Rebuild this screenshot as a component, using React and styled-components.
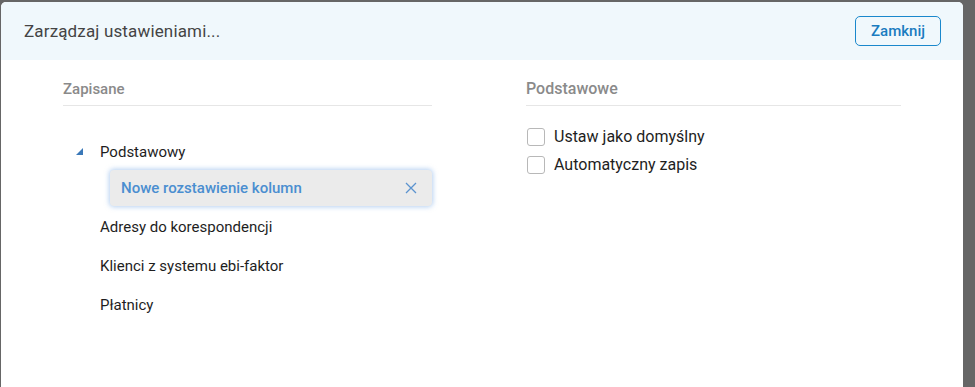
import React from 'react';
import styled, { createGlobalStyle } from 'styled-components';

const Global = createGlobalStyle`
  html, body {
    margin: 0;
    padding: 0;
    height: 100%;
    background: #666666;
    font-family: Roboto, "Liberation Sans", sans-serif;
    overflow: hidden;
  }
  #root { height: 100%; }
`;

const Backdrop = styled.div`
  height: 100%;
  padding: 2px 12px 0 1px;
  box-sizing: border-box;
  display: flex;
`;

const Modal = styled.div`
  flex: 1;
  background: #fff;
  border-radius: 5px 5px 0 0;
  overflow: hidden;
  display: flex;
  flex-direction: column;
`;

const Header = styled.div`
  height: 58px;
  background: #f0f8fc;
  display: flex;
  align-items: center;
  justify-content: space-between;
  padding: 0 22px 0 23px;
`;

const Title = styled.h2`
  margin: 0;
  font-size: 17px;
  font-weight: 400;
  color: #444;
  letter-spacing: 0.15px;
`;

const CloseButton = styled.button`
  height: 30px;
  width: 86px;
  padding: 0;
  border: 1px solid #1a88cc;
  border-radius: 5px;
  background: transparent;
  color: #1a7cc0;
  font-family: inherit;
  font-size: 15px;
  font-weight: 500;
  cursor: pointer;
`;

const Body = styled.div`
  display: grid;
  grid-template-columns: 369px 375px;
  column-gap: 94px;
  padding: 20px 0 0 62px;
`;

const Column = styled.section`
  display: flex;
  flex-direction: column;
`;

const SectionTitle = styled.div`
  font-size: ${p => p.$size || 15}px;
  font-weight: 500;
  color: #8a8a8a;
  padding-bottom: 7px;
  border-bottom: 1px solid #e6e6e6;
  line-height: 18px;
`;

const Tree = styled.ul`
  list-style: none;
  margin: 0;
  padding: 36px 0 0 0;
  font-size: 15px;
  color: #1e1e1e;
`;

const Node = styled.li`
  display: flex;
  align-items: center;
  height: 20px;
  padding-left: ${p => (p.$leaf ? 37 : 13)}px;
  margin-bottom: ${p => p.$gap || 19}px;
`;

const Caret = styled.svg`
  width: 8px;
  height: 8px;
  margin-right: 16px;
`;

const Selected = styled.div`
  margin: 0 0 11px 47px;
  height: 36px;
  background: #ebebeb;
  border-radius: 4px;
  box-shadow: 0 0 5px 1px rgba(120, 170, 230, 0.55);
  display: flex;
  align-items: center;
  justify-content: space-between;
  padding: 0 15px 0 11px;
  color: #4a8ed0;
  font-size: 15px;
  font-weight: 500;
`;

const Options = styled.div`
  display: flex;
  flex-direction: column;
  gap: 9px;
  padding-top: 21px;
`;

const Option = styled.label`
  display: flex;
  align-items: center;
  gap: 9px;
  font-size: 16px;
  color: #1e1e1e;
`;

const Box = styled.span`
  width: 16px;
  height: 16px;
  border: 1px solid #b8b8b8;
  border-radius: 3px;
  background: #fff;
  margin-left: 1px;
`;

export default function App() {
  return (
    <>
      <Global />
      <Backdrop>
        <Modal>
          <Header>
            <Title>Zarządzaj ustawieniami...</Title>
            <CloseButton>Zamknij</CloseButton>
          </Header>
          <Body>
            <Column>
              <SectionTitle>Zapisane</SectionTitle>
              <Tree>
                <Node $gap={8}>
                  <Caret viewBox="0 0 8 8">
                    <polygon points="7,0 7,7 0,7" fill="#3a78b8" />
                  </Caret>
                  Podstawowy
                </Node>
                <Selected>
                  Nowe rozstawienie kolumn
                  <svg width="12" height="12" viewBox="0 0 12 12">
                    <path d="M1 1 L11 11 M11 1 L1 11" stroke="#5b93cf" strokeWidth="1.3" />
                  </svg>
                </Selected>
                <Node $leaf>Adresy do korespondencji</Node>
                <Node $leaf>Klienci z systemu ebi-faktor</Node>
                <Node $leaf>Płatnicy</Node>
              </Tree>
            </Column>
            <Column>
              <SectionTitle $size={16}>Podstawowe</SectionTitle>
              <Options>
                <Option><Box />Ustaw jako domyślny</Option>
                <Option><Box />Automatyczny zapis</Option>
              </Options>
            </Column>
          </Body>
        </Modal>
      </Backdrop>
    </>
  );
}
